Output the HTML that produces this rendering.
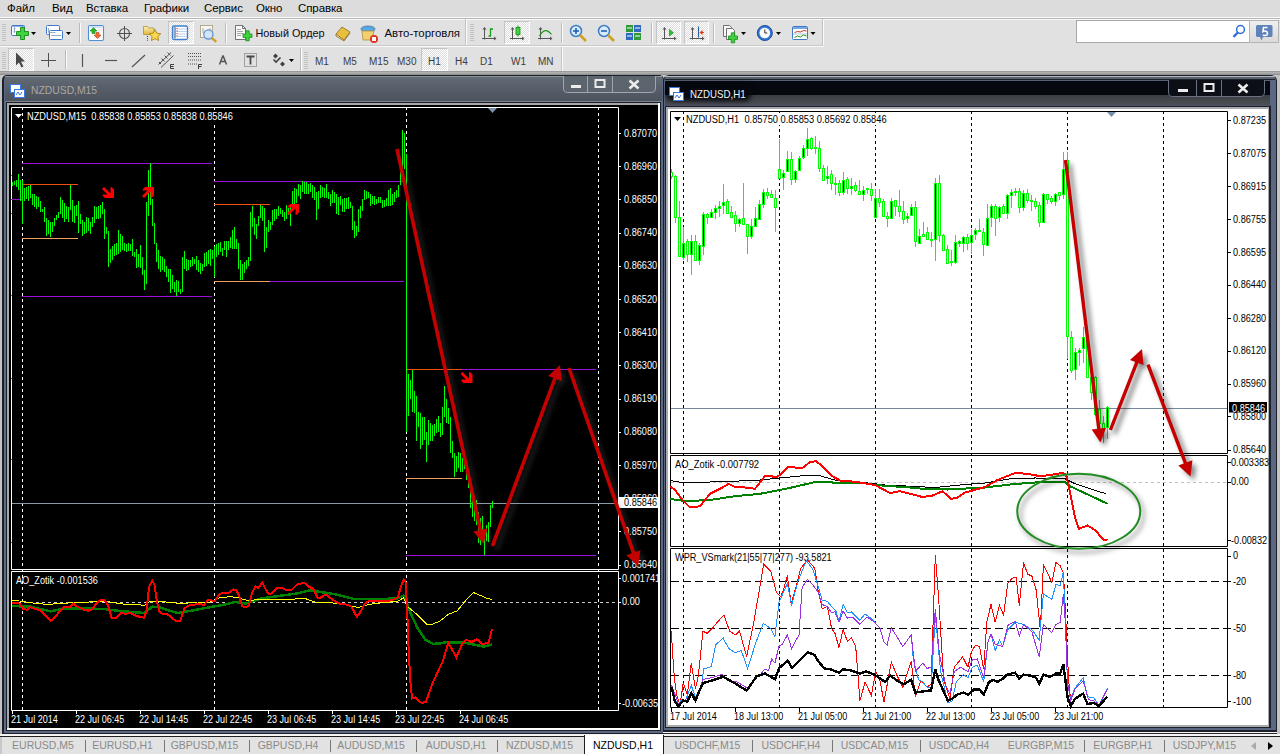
<!DOCTYPE html><html><head><meta charset="utf-8"><style>
*{margin:0;padding:0;box-sizing:border-box}
html,body{width:1280px;height:754px;overflow:hidden;background:#e4e4e4;font-family:"Liberation Sans", sans-serif}
.a{position:absolute}
.mi{position:absolute;top:1px;font-size:11.5px;color:#000;line-height:14px;letter-spacing:-0.1px}
.tab{position:absolute;top:737px;font-size:10.5px;color:#8a8a8a;line-height:16px;white-space:nowrap}
.sep{position:absolute;top:740px;width:1px;height:12px;background:#777}
svg text{font-family:"Liberation Sans", sans-serif}
</style></head><body>
<div class="a" style="left:0;top:0;width:1280px;height:18px;background:#dcdcdc"></div>
<div class="a" style="left:0;top:17px;width:1280px;height:1px;background:#fafafa"></div>
<div class="a" style="left:0;top:18px;width:1280px;height:1px;background:#b4b4b4"></div>
<div class="a" style="left:0;top:19px;width:1280px;height:1px;background:#fafafa"></div>
<div class="mi" style="left:7px">Файл</div>
<div class="mi" style="left:52px">Вид</div>
<div class="mi" style="left:86px">Вставка</div>
<div class="mi" style="left:144px">Графики</div>
<div class="mi" style="left:204px">Сервис</div>
<div class="mi" style="left:256px">Окно</div>
<div class="mi" style="left:298px">Справка</div>
<div class="a" style="left:0;top:20px;width:1280px;height:52px;background:#e1e1e1"></div>
<div class="a" style="left:0;top:45px;width:823px;height:1px;background:#c9c9c9"></div>
<div class="a" style="left:0;top:46px;width:824px;height:1px;background:#fafafa"></div>
<div class="a" style="left:2px;top:24px;width:4px;height:1px;background:#c2c2c2"></div>
<div class="a" style="left:2px;top:26px;width:4px;height:1px;background:#c2c2c2"></div>
<div class="a" style="left:2px;top:28px;width:4px;height:1px;background:#c2c2c2"></div>
<div class="a" style="left:2px;top:30px;width:4px;height:1px;background:#c2c2c2"></div>
<div class="a" style="left:2px;top:32px;width:4px;height:1px;background:#c2c2c2"></div>
<div class="a" style="left:2px;top:34px;width:4px;height:1px;background:#c2c2c2"></div>
<div class="a" style="left:2px;top:36px;width:4px;height:1px;background:#c2c2c2"></div>
<div class="a" style="left:2px;top:38px;width:4px;height:1px;background:#c2c2c2"></div>
<div class="a" style="left:2px;top:40px;width:4px;height:1px;background:#c2c2c2"></div>
<div class="a" style="left:2px;top:52px;width:4px;height:1px;background:#c2c2c2"></div>
<div class="a" style="left:2px;top:54px;width:4px;height:1px;background:#c2c2c2"></div>
<div class="a" style="left:2px;top:56px;width:4px;height:1px;background:#c2c2c2"></div>
<div class="a" style="left:2px;top:58px;width:4px;height:1px;background:#c2c2c2"></div>
<div class="a" style="left:2px;top:60px;width:4px;height:1px;background:#c2c2c2"></div>
<div class="a" style="left:2px;top:62px;width:4px;height:1px;background:#c2c2c2"></div>
<div class="a" style="left:2px;top:64px;width:4px;height:1px;background:#c2c2c2"></div>
<div class="a" style="left:2px;top:66px;width:4px;height:1px;background:#c2c2c2"></div>
<div class="a" style="left:2px;top:68px;width:4px;height:1px;background:#c2c2c2"></div>
<div class="a" style="left:470px;top:24px;width:4px;height:1px;background:#c2c2c2"></div>
<div class="a" style="left:470px;top:26px;width:4px;height:1px;background:#c2c2c2"></div>
<div class="a" style="left:470px;top:28px;width:4px;height:1px;background:#c2c2c2"></div>
<div class="a" style="left:470px;top:30px;width:4px;height:1px;background:#c2c2c2"></div>
<div class="a" style="left:470px;top:32px;width:4px;height:1px;background:#c2c2c2"></div>
<div class="a" style="left:470px;top:34px;width:4px;height:1px;background:#c2c2c2"></div>
<div class="a" style="left:470px;top:36px;width:4px;height:1px;background:#c2c2c2"></div>
<div class="a" style="left:470px;top:38px;width:4px;height:1px;background:#c2c2c2"></div>
<div class="a" style="left:470px;top:40px;width:4px;height:1px;background:#c2c2c2"></div>
<div class="a" style="left:304px;top:52px;width:4px;height:1px;background:#c2c2c2"></div>
<div class="a" style="left:304px;top:54px;width:4px;height:1px;background:#c2c2c2"></div>
<div class="a" style="left:304px;top:56px;width:4px;height:1px;background:#c2c2c2"></div>
<div class="a" style="left:304px;top:58px;width:4px;height:1px;background:#c2c2c2"></div>
<div class="a" style="left:304px;top:60px;width:4px;height:1px;background:#c2c2c2"></div>
<div class="a" style="left:304px;top:62px;width:4px;height:1px;background:#c2c2c2"></div>
<div class="a" style="left:304px;top:64px;width:4px;height:1px;background:#c2c2c2"></div>
<div class="a" style="left:304px;top:66px;width:4px;height:1px;background:#c2c2c2"></div>
<div class="a" style="left:304px;top:68px;width:4px;height:1px;background:#c2c2c2"></div>
<div class="a" style="left:79px;top:23px;width:1px;height:20px;background:#b9b9b9"></div>
<div class="a" style="left:80px;top:23px;width:1px;height:20px;background:#fdfdfd"></div>
<div class="a" style="left:225px;top:23px;width:1px;height:20px;background:#b9b9b9"></div>
<div class="a" style="left:226px;top:23px;width:1px;height:20px;background:#fdfdfd"></div>
<div class="a" style="left:561px;top:23px;width:1px;height:20px;background:#b9b9b9"></div>
<div class="a" style="left:562px;top:23px;width:1px;height:20px;background:#fdfdfd"></div>
<div class="a" style="left:651px;top:23px;width:1px;height:20px;background:#b9b9b9"></div>
<div class="a" style="left:652px;top:23px;width:1px;height:20px;background:#fdfdfd"></div>
<div class="a" style="left:713px;top:23px;width:1px;height:20px;background:#b9b9b9"></div>
<div class="a" style="left:714px;top:23px;width:1px;height:20px;background:#fdfdfd"></div>
<div class="a" style="left:65px;top:50px;width:1px;height:19px;background:#b9b9b9"></div>
<div class="a" style="left:66px;top:50px;width:1px;height:19px;background:#fdfdfd"></div>
<div class="a" style="left:300px;top:48px;width:1px;height:23px;background:#b9b9b9"></div>
<div class="a" style="left:301px;top:48px;width:1px;height:23px;background:#fdfdfd"></div>
<div class="a" style="left:465px;top:19px;width:1px;height:26px;background:#c4c4c4"></div>
<div class="a" style="left:466px;top:19px;width:1px;height:26px;background:#fafafa"></div>
<div class="a" style="left:822px;top:19px;width:1px;height:26px;background:#c4c4c4"></div>
<div class="a" style="left:823px;top:19px;width:1px;height:26px;background:#fafafa"></div>
<div class="a" style="left:561px;top:47px;width:1px;height:25px;background:#c4c4c4"></div>
<div class="a" style="left:562px;top:47px;width:1px;height:25px;background:#fafafa"></div>
<div class="a" style="left:168px;top:21px;width:26px;height:23px;background:repeating-conic-gradient(#ffffff 0 25%,#dcdcdc 0 50%) 0 0/2px 2px;border:1px solid;border-color:#c4c4c4 #fdfdfd #fdfdfd #c4c4c4"></div>
<div class="a" style="left:504px;top:21px;width:26px;height:23px;background:repeating-conic-gradient(#ffffff 0 25%,#dcdcdc 0 50%) 0 0/2px 2px;border:1px solid;border-color:#c4c4c4 #fdfdfd #fdfdfd #c4c4c4"></div>
<div class="a" style="left:656px;top:21px;width:25px;height:23px;background:repeating-conic-gradient(#ffffff 0 25%,#dcdcdc 0 50%) 0 0/2px 2px;border:1px solid;border-color:#c4c4c4 #fdfdfd #fdfdfd #c4c4c4"></div>
<div class="a" style="left:684px;top:21px;width:25px;height:23px;background:repeating-conic-gradient(#ffffff 0 25%,#dcdcdc 0 50%) 0 0/2px 2px;border:1px solid;border-color:#c4c4c4 #fdfdfd #fdfdfd #c4c4c4"></div>
<div class="a" style="left:8px;top:48px;width:26px;height:23px;background:repeating-conic-gradient(#ffffff 0 25%,#dcdcdc 0 50%) 0 0/2px 2px;border:1px solid;border-color:#c4c4c4 #fdfdfd #fdfdfd #c4c4c4"></div>
<div class="a" style="left:421px;top:48px;width:27px;height:23px;background:repeating-conic-gradient(#ffffff 0 25%,#dcdcdc 0 50%) 0 0/2px 2px;border:1px solid;border-color:#c4c4c4 #fdfdfd #fdfdfd #c4c4c4"></div>
<svg class="a" style="left:0;top:0" width="480" height="46"><text x="255.5" y="36.5" font-size="10.6" fill="#0a0a1a" textLength="69.0" lengthAdjust="spacingAndGlyphs" xml:space="preserve" >Новый Ордер</text><text x="384.5" y="36.5" font-size="10.6" fill="#0a0a1a" textLength="75.5" lengthAdjust="spacingAndGlyphs" xml:space="preserve" >Авто-торговля</text></svg>
<div class="a" style="left:315px;top:56px;font-size:10px;color:#3c3c3c;line-height:12px;white-space:nowrap">M1</div>
<div class="a" style="left:343px;top:56px;font-size:10px;color:#3c3c3c;line-height:12px;white-space:nowrap">M5</div>
<div class="a" style="left:369px;top:56px;font-size:10px;color:#3c3c3c;line-height:12px;white-space:nowrap">M15</div>
<div class="a" style="left:397px;top:56px;font-size:10px;color:#3c3c3c;line-height:12px;white-space:nowrap">M30</div>
<div class="a" style="left:428px;top:56px;font-size:10px;color:#3c3c3c;line-height:12px;white-space:nowrap">H1</div>
<div class="a" style="left:455px;top:56px;font-size:10px;color:#3c3c3c;line-height:12px;white-space:nowrap">H4</div>
<div class="a" style="left:480px;top:56px;font-size:10px;color:#3c3c3c;line-height:12px;white-space:nowrap">D1</div>
<div class="a" style="left:511px;top:56px;font-size:10px;color:#3c3c3c;line-height:12px;white-space:nowrap">W1</div>
<div class="a" style="left:538px;top:56px;font-size:10px;color:#3c3c3c;line-height:12px;white-space:nowrap">MN</div>
<div class="a" style="left:1076px;top:20px;width:174px;height:23px;background:#fff;border:1px solid #a8a8a8"></div>
<div class="a" style="left:1249px;top:20px;width:30px;height:23px;background:linear-gradient(#efefef,#dadada);border:1px solid #b4b4b4"></div>
<svg class="a" style="left:0;top:0" width="1280" height="72" viewBox="0 0 1280 72">
<rect x="11.5" y="25.5" width="13" height="10" rx="1" fill="#fff" stroke="#3b78c8"/><path d="M12 26.5h12" stroke="#8fb4e8"/><path d="M14.5 27.5v5M13.5 28.5l1-1 1 1M13.5 31.5l1 1 1-1" stroke="#7a98c0" fill="none" stroke-width="0.8"/><path d="M20 31.5h4v-4h4v4h4v4h-4v4h-4v-4h-4z" transform="translate(-3.5,0)" fill="#3fd43f" stroke="#178a17" stroke-width="0.9"/><path d="M31 32h5l-2.5 3z" fill="#000"/><rect x="46.5" y="25.5" width="13" height="9" rx="1" fill="#fff" stroke="#3b78c8"/><rect x="49.5" y="30.5" width="13" height="9" rx="1" fill="#fff" stroke="#3b78c8"/><path d="M48.5 32.5h7M51 35.5h10M48.5 28v4.5" stroke="#7a98c0" stroke-width="0.8"/><path d="M66 32h5l-2.5 3z" fill="#000"/><rect x="88.5" y="25.5" width="15" height="15" rx="1.5" fill="#fff" stroke="#4f8fd8" stroke-width="1.1"/><path d="M90 27h12" stroke="#a8c8f0"/><path d="M98 29h4M98 31h4M95 36h6M95 38h6" stroke="#ddd" stroke-width="0.7"/><path d="M90 31l3.5-3.5 3.5 3.5h-2v2.5h-3v-2.5z" fill="#2cb52c" stroke="#168a16" stroke-width="0.6"/><path d="M94 35l3.5 3.5 3.5-3.5h-2v-2.5h-3v2.5z" fill="#ee6a3a" stroke="#c04010" stroke-width="0.6"/><circle cx="124.5" cy="33.5" r="5" fill="none" stroke="#505050" stroke-width="1.1"/><path d="M124.5 26v15M117 33.5h15" stroke="#505050" stroke-width="1"/><defs><linearGradient id="fg" x1="0" y1="0" x2="0" y2="1"><stop offset="0" stop-color="#fbf0b8"/><stop offset="1" stop-color="#e0b838"/></linearGradient></defs><path d="M143.5 26.5h4l1 1.5h5.5v6.5h-10.5z" fill="url(#fg)" stroke="#b0902a" stroke-width="0.8"/><path d="M147.5 36v5" stroke="#333" stroke-dasharray="1,1.2"/><path d="M155 29.5l1.8 3.7 4 .5-2.9 2.8.7 4-3.6-1.9-3.6 1.9.7-4-2.9-2.8 4-.5z" fill="#f6d848" stroke="#b08418" stroke-width="0.9"/><rect x="172.5" y="26" width="15" height="13.5" rx="1.5" fill="#fff" stroke="#3d7fd0" stroke-width="1.3"/><rect x="173.5" y="27" width="2.5" height="11.5" fill="#8aa4c4"/><path d="M177 29h10M177 31.5h10M177 34h10M177 36.5h10" stroke="#a9c4ee" stroke-width="0.8"/><path d="M176.5 28.5h1M176.5 33.5h1" stroke="#d02020" stroke-width="1"/><path d="M176.5 31h1M176.5 36h1" stroke="#202020" stroke-width="1"/><rect x="200.5" y="25.5" width="12" height="12" fill="#f8f6ee" stroke="#b0a890"/><path d="M203 28v5M210 28v5" stroke="#909090" stroke-width="0.8"/><circle cx="208.4" cy="34.5" r="4.6" fill="#cfe2f6" fill-opacity="0.85" stroke="#5a90d0" stroke-width="1.2"/><path d="M211.8 38l4.5 3.8" stroke="#d0a020" stroke-width="2.4"/><path d="M235.5 25.5h7l3 3v11h-10z" fill="#fafafa" stroke="#707070"/><path d="M242.5 25.5v3h3" fill="none" stroke="#707070"/><path d="M237 29.5h4M237 31.5h6M237 33.5h6M237 35.5h4" stroke="#909090" stroke-width="0.8"/><path d="M243 34h2.8v-3.2h3.4v3.2h2.8v3.4h-2.8v3.4h-3.4v-3.4h-2.8z" fill="#3fd43f" stroke="#178a17" stroke-width="0.8"/><path d="M336 34l6-7 8 5-6 8z" fill="#e8c040" stroke="#9a7420" stroke-width="0.9"/><path d="M336 34l0 2 8 5 6-8" fill="none" stroke="#9a7420" stroke-width="0.9"/><ellipse cx="368" cy="29" rx="7" ry="3" fill="#5aa8e0" stroke="#3a78b0" stroke-width="0.8"/><path d="M362 31l12 0-2 9h-9z" fill="#f2d070" stroke="#b09040" stroke-width="0.8"/><circle cx="374" cy="39" r="4" fill="#e03020"/><rect x="372" y="37" width="4" height="4" fill="#fff"/><path d="M484.5 28.0v11.5M482.0 38.5h13" stroke="#555" stroke-width="1"/><path d="M482.5 29.5l2-2.5 2 2.5zM494.0 36.5l2.5 2-2.5 2z" fill="#555"/><path d="M488.5 36h2v-7h2.5" fill="none" stroke="#1a9a1a" stroke-width="1.3"/><path d="M512.5 28.0v11.5M510.0 38.5h13" stroke="#555" stroke-width="1"/><path d="M510.5 29.5l2-2.5 2 2.5zM522.0 36.5l2.5 2-2.5 2z" fill="#555"/><path d="M518 25.5v11" stroke="#168a16"/><rect x="516" y="27.5" width="4" height="7" fill="#3fd43f" stroke="#168a16" stroke-width="0.8"/><path d="M540.5 28.0v11.5M538.0 38.5h13" stroke="#555" stroke-width="1"/><path d="M538.5 29.5l2-2.5 2 2.5zM550.0 36.5l2.5 2-2.5 2z" fill="#555"/><path d="M539.5 36Q545 26 551.5 34.5" fill="none" stroke="#1a9a1a" stroke-width="1.2"/><circle cx="576" cy="31" r="5.5" fill="#d8ecfb" stroke="#3c7cc8" stroke-width="1.5"/><path d="M580 35l6 6" stroke="#d0a020" stroke-width="2.6"/><path d="M573 31h6" stroke="#2060b0" stroke-width="1.6"/><path d="M576 28v6" stroke="#2060b0" stroke-width="1.6"/><circle cx="604" cy="31" r="5.5" fill="#d8ecfb" stroke="#3c7cc8" stroke-width="1.5"/><path d="M608 35l6 6" stroke="#d0a020" stroke-width="2.6"/><path d="M601 31h6" stroke="#2060b0" stroke-width="1.6"/><rect x="626" y="25" width="7" height="7" fill="#2e9a3a"/><rect x="634" y="25" width="7" height="7" fill="#2f68c0"/><rect x="626" y="33" width="7" height="7" fill="#2f68c0"/><rect x="634" y="33" width="7" height="7" fill="#2e9a3a"/><path d="M627 28h5M635 28h5M627 36h5M635 36h5" stroke="#fff" stroke-width="1"/><path d="M664.5 28.0v11.5M662.0 38.5h13" stroke="#555" stroke-width="1"/><path d="M662.5 29.5l2-2.5 2 2.5zM674.0 36.5l2.5 2-2.5 2z" fill="#555"/><path d="M669.5 29.5l4 3.2-4 3.2z" fill="#2cc02c" stroke="#168a16" stroke-width="0.6"/><path d="M692.5 28.0v11.5M690.0 38.5h13" stroke="#555" stroke-width="1"/><path d="M690.5 29.5l2-2.5 2 2.5zM702.0 36.5l2.5 2-2.5 2z" fill="#555"/><path d="M698.5 26.5v11" stroke="#2a5a9a" stroke-width="1.1"/><path d="M699.5 32.5l3-2.5v5z" fill="#e04010"/><path d="M702 32.5h2" stroke="#e04010"/><path d="M723.5 25.5h6l2 2v9h-8z" fill="#fafafa" stroke="#707070"/><path d="M726.5 28.5h6l2 2v9h-8z" fill="#fafafa" stroke="#707070"/><path d="M728.5 36h2.8v-3.2h3.4v3.2h2.8v3.4h-2.8v3.4h-3.4v-3.4h-2.8z" fill="#3fd43f" stroke="#178a17" stroke-width="0.8"/><path d="M741 32h5l-2.5 3z" fill="#000"/><circle cx="764.8" cy="33" r="7.5" fill="#2f78d8" stroke="#1a4a90"/><circle cx="764.8" cy="33" r="5.3" fill="#fafafa"/><path d="M764.8 29.5v3.5h2.5" stroke="#333" fill="none"/><path d="M776 32h5l-2.5 3z" fill="#000"/><rect x="792.5" y="26.5" width="15" height="13" rx="1" fill="#fff" stroke="#3b78c8"/><rect x="793" y="27" width="14" height="2" fill="#7aa6e0"/><path d="M793 34h14" stroke="#a0b8d8" stroke-width="0.8"/><path d="M794.5 32.5l3-1 3 .5 3-1.5 3 .5" stroke="#c03020" fill="none"/><path d="M794.5 37.5l3-1.5 3 1 3-2 3 1" stroke="#1a9a1a" fill="none"/><path d="M810.5 32h5l-2.5 3z" fill="#000"/><circle cx="1240.5" cy="29.5" r="3.9" fill="#fff" stroke="#2f6ed8" stroke-width="1.5"/><path d="M1237.8 32.5l-4.3 4.3" stroke="#2f6ed8" stroke-width="2.4"/><path d="M1257.5 25h13.5a1.5 1.5 0 0 1 1.5 1.5v9a1.5 1.5 0 0 1-1.5 1.5h-8l-1.5 3.5-1.5-3.5h-2.5a1.5 1.5 0 0 1-1.5-1.5v-9a1.5 1.5 0 0 1 1.5-1.5z" fill="#5f82b8"/><path d="M1267.5 27.5h-4l-.5 4c2-1 4.5-.5 4.5 1.8 0 2.5-3.2 2.7-4.7 1.6" fill="none" stroke="#fff" stroke-width="1.6"/><path d="M16 52.5v13l3-3 2.5 5 2-1-2.5-5h4z" fill="#484848"/><path d="M48.5 53v14M41 60.5h15" stroke="#505050" stroke-width="1"/><path d="M82.5 54v13" stroke="#555" stroke-width="1.2"/><path d="M105 60.5h12" stroke="#555" stroke-width="1.2"/><path d="M132 67l13-12" stroke="#555" stroke-width="1.2"/><path d="M158.5 64.5l12.5-12M161 67.5l12.5-12M161.5 58.5l3 3M164.5 55.5l3 3M167.5 52.5l3 3M159 62l2 2" stroke="#505050" stroke-width="1"/><path d="M170.5 64.5v4M170.5 64.5h3.5M170.5 66.5h3M170.5 68.5h3.5" stroke="#404040" stroke-width="1"/><path d="M188 53.5h13M188 56.5h13M188 60h13M188 64h9" stroke="#505050" stroke-width="1" stroke-dasharray="1,1"/><path d="M198.5 64.5v4.5M198.5 64.5h3.5M198.5 66.5h3" stroke="#404040" stroke-width="1"/><path d="M219.5 64.5l3.3-8.5h0.4l3.3 8.5M221 61.5h4.2" stroke="#555" stroke-width="1.5" fill="none"/><rect x="244.5" y="53.5" width="12" height="13" fill="none" stroke="#606060" stroke-dasharray="1,1"/><path d="M246.5 56.5h8M250.5 56.5v8" stroke="#484848" stroke-width="1.8"/><path d="M275.5 53.5l2.5 2.5-2.5 2.5-2.5-2.5zM282.5 61.5l2.5 2.5-2.5 2.5-2.5-2.5z" fill="#404040"/><path d="M273.5 59.5l2.5 2.5 4.5-4.5" stroke="#404040" stroke-width="1.6" fill="none"/><path d="M289 59h5l-2.5 3z" fill="#000"/>
</svg>
<div class="a" style="left:0;top:71px;width:1280px;height:1px;background:#9a9a9a"></div>
<div class="a" style="left:0;top:72px;width:1280px;height:664px;background:#c4c4c4"></div>
<div class="a" style="left:0;top:72px;width:1280px;height:3px;background:linear-gradient(#b8b8b8,#8c8c8c)"></div>
<div class="a" style="left:2px;top:75px;width:662px;height:659px;background:#1c2028;border-radius:5px 5px 0 0"></div>
<div class="a" style="left:4px;top:76px;width:659px;height:657px;background:#5e6a84;border-radius:4px 4px 0 0"></div>
<div class="a" style="left:5px;top:76px;width:657px;height:1px;background:#8c949c;"></div>
<div class="a" style="left:5px;top:77px;width:657px;height:24px;background:linear-gradient(#626a75,#545b66 60%,#4d545e);"></div>
<div class="a" style="left:6px;top:101px;width:655px;height:1px;background:#7c848c;"></div>
<div class="a" style="left:6px;top:102px;width:655px;height:629px;background:#1c2028;"></div>
<div class="a" style="left:7px;top:103px;width:653px;height:627px;background:#ffffff;"></div>
<div class="a" style="left:7px;top:103px;width:651px;height:625px;background:#a8a8a8;"></div>
<div class="a" style="left:9px;top:105px;width:649px;height:623px;background:#000;"></div>
<svg class="a" style="left:563px;top:76px" width="94" height="18"><path d="M0.5 0V12.0Q0.5 16.5 4.5 16.5H88.0Q92.5 16.5 92.5 12.0V0" fill="#5c646e" stroke="#a0a6ae"/><path d="M24.5 0V16.0M49.5 0V16.0" stroke="#a0a6ae"/><rect x="8" y="9" width="10" height="3" fill="#ececec"/><rect x="32.5" y="4.0" width="9" height="7" fill="none" stroke="#ececec" stroke-width="2"/><path d="M32.5 3.5h9" stroke="#ececec" stroke-width="1"/><path d="M66.5 4.5L75.5 12.5M75.5 4.5L66.5 12.5" stroke="#ececec" stroke-width="2.6"/></svg>
<svg class="a" style="left:0;top:0" width="800" height="110"><text x="31.0" y="94.0" font-size="11.5" fill="#aca8a2" textLength="66.1" lengthAdjust="spacingAndGlyphs" xml:space="preserve" >NZDUSD,M15</text></svg>
<div class="a" style="left:663px;top:75px;width:614px;height:657px;background:#1c2028;border-radius:6px 6px 0 0"></div>
<div class="a" style="left:664px;top:76px;width:612px;height:654px;background:#5b6682;border-radius:5px 5px 0 0"></div>
<div class="a" style="left:665px;top:76px;width:610px;height:1px;background:#b4b8c0;border-radius:4px 4px 0 0"></div>
<div class="a" style="left:665px;top:77px;width:610px;height:2px;background:#5a6470;"></div>
<div class="a" style="left:665px;top:79px;width:610px;height:1px;background:#1c2028;"></div>
<div class="a" style="left:665px;top:80px;width:605px;height:1px;background:#586078;"></div>
<div class="a" style="left:665px;top:81px;width:605px;height:14px;background:#05080e;"></div>
<div class="a" style="left:665px;top:95px;width:605px;height:10px;background:linear-gradient(#3a3e42,#4c5054);"></div>
<div class="a" style="left:665px;top:105px;width:606px;height:1px;background:#4a5068;"></div>
<div class="a" style="left:667px;top:84px;width:84px;height:17px;background:#05080e;filter:blur(2.5px);border-radius:6px"></div>
<div class="a" style="left:665px;top:106px;width:606px;height:622px;background:#1c2028;"></div>
<div class="a" style="left:666px;top:107px;width:603px;height:620px;background:#a8aaac;"></div>
<div class="a" style="left:668px;top:109px;width:600px;height:616px;background:#fff;"></div>
<div class="a" style="left:663px;top:732px;width:614px;height:1px;background:#f2f2f2;"></div>
<div class="a" style="left:663px;top:733px;width:614px;height:1px;background:#2a2a2a;"></div>
<svg class="a" style="left:1168px;top:80px" width="98" height="18"><path d="M0.5 0V12.0Q0.5 16.5 4.5 16.5H92.0Q96.5 16.5 96.5 12.0V0" fill="#0c0f16" stroke="#6a7282"/><path d="M28.5 0V16.0M53.5 0V16.0" stroke="#6a7282"/><rect x="10" y="9" width="10" height="3" fill="#ececec"/><rect x="36.5" y="4.0" width="9" height="7" fill="none" stroke="#ececec" stroke-width="2"/><path d="M36.5 3.5h9" stroke="#ececec" stroke-width="1"/><path d="M70.5 4.5L79.5 12.5M79.5 4.5L70.5 12.5" stroke="#ececec" stroke-width="2.6"/></svg>
<svg class="a" style="left:0;top:0" width="800" height="110"><text x="690.0" y="98.0" font-size="11.5" fill="#f4f4f4" textLength="55.6" lengthAdjust="spacingAndGlyphs" xml:space="preserve" >NZDUSD,H1</text></svg>
<svg class="a" style="left:10px;top:84px" width="16" height="15"><rect x="0.5" y="0.5" width="10" height="8" fill="#fff" stroke="#3a7ae0"/><rect x="4.5" y="5.5" width="10" height="8" fill="#fff" stroke="#3a7ae0"/><path d="M6 11l2-3 2 3 2-3" stroke="#3a7ae0" fill="none"/></svg>
<svg class="a" style="left:669px;top:87px" width="16" height="15"><rect x="0.5" y="0.5" width="10" height="8" fill="#fff" stroke="#3a7ae0"/><rect x="4.5" y="5.5" width="10" height="8" fill="#fff" stroke="#3a7ae0"/><path d="M6 11l2-3 2 3 2-3" stroke="#3a7ae0" fill="none"/></svg>
<div class="a" style="left:0;top:734px;width:1280px;height:2px;background:#f4f4f4"></div>
<div class="a" style="left:0;top:736px;width:1280px;height:1px;background:#202020"></div>
<div class="a" style="left:0;top:737px;width:1280px;height:17px;background:#e2e2e2"></div>
<div class="a" style="left:0;top:737px;width:2px;height:17px;background:#c8c8c8"></div>
<div class="a" style="left:584px;top:735px;width:80px;height:19px;background:#fff;border:1px solid #202020;border-bottom:none;border-top:none"></div>
<div class="tab" style="left:8px;width:70px;color:#8a8a8a;text-align:center">EURUSD,M5</div>
<div class="tab" style="left:88px;width:69px;color:#8a8a8a;text-align:center">EURUSD,H1</div>
<div class="tab" style="left:167px;width:75px;color:#8a8a8a;text-align:center">GBPUSD,M15</div>
<div class="tab" style="left:253px;width:70px;color:#8a8a8a;text-align:center">GBPUSD,H4</div>
<div class="tab" style="left:333px;width:76px;color:#8a8a8a;text-align:center">AUDUSD,M15</div>
<div class="tab" style="left:421px;width:70px;color:#8a8a8a;text-align:center">AUDUSD,H1</div>
<div class="tab" style="left:501px;width:77px;color:#8a8a8a;text-align:center">NZDUSD,M15</div>
<div class="tab" style="left:588px;width:70px;color:#000;text-align:center">NZDUSD,H1</div>
<div class="tab" style="left:669px;width:77px;color:#8a8a8a;text-align:center">USDCHF,M15</div>
<div class="tab" style="left:756px;width:70px;color:#8a8a8a;text-align:center">USDCHF,H4</div>
<div class="tab" style="left:836px;width:77px;color:#8a8a8a;text-align:center">USDCAD,M15</div>
<div class="tab" style="left:924px;width:70px;color:#8a8a8a;text-align:center">USDCAD,H4</div>
<div class="tab" style="left:1003px;width:76px;color:#8a8a8a;text-align:center">EURGBP,M15</div>
<div class="tab" style="left:1089px;width:68px;color:#8a8a8a;text-align:center">EURGBP,H1</div>
<div class="tab" style="left:1168px;width:73px;color:#8a8a8a;text-align:center">USDJPY,M15</div>
<div class="sep" style="left:85px"></div>
<div class="sep" style="left:164px"></div>
<div class="sep" style="left:249px"></div>
<div class="sep" style="left:330px"></div>
<div class="sep" style="left:416px"></div>
<div class="sep" style="left:497px"></div>
<div class="sep" style="left:752px"></div>
<div class="sep" style="left:832px"></div>
<div class="sep" style="left:920px"></div>
<div class="sep" style="left:1084px"></div>
<div class="sep" style="left:1164px"></div>
<svg class="a" style="left:1248px;top:740px" width="30" height="12"><path d="M8 2v8l-5-4z" fill="#aaa"/><path d="M20 2v8l5-4z" fill="#000"/></svg>
<svg class="a" style="left:0;top:0" width="1280" height="754" viewBox="0 0 1280 754"><defs><filter id="sh" x="-50%" y="-50%" width="200%" height="200%"><feGaussianBlur stdDeviation="2.5"/></filter><clipPath id="clL"><rect x="9" y="104" width="649" height="624"/></clipPath><clipPath id="clR"><rect x="667" y="107" width="601" height="618"/></clipPath><clipPath id="clLmain"><rect x="12" y="108" width="606" height="461"/></clipPath><clipPath id="clRmain"><rect x="671" y="112" width="556" height="341"/></clipPath></defs><g clip-path="url(#clL)"><path d="M22.5 107V710" stroke="#fff" stroke-width="1" stroke-dasharray="3,3"/><path d="M214.5 107V710" stroke="#fff" stroke-width="1" stroke-dasharray="3,3"/><path d="M406.5 107V710" stroke="#fff" stroke-width="1" stroke-dasharray="3,3"/><path d="M598.5 107V710" stroke="#fff" stroke-width="1" stroke-dasharray="3,3"/><path d="M11.5 107.5H618.5V569.5H11.5Z" fill="none" stroke="#fff"/><path d="M11.5 571.5H618.5V710.5H11.5Z" fill="none" stroke="#fff"/><path d="M12 503.5H618" stroke="#8a9aa8"/><path d="M22 163.5H212M214 181.5H406M22 296.5H212M214 281.5H404M406 369.5H596M406 555.5H596M11 199.5H22" stroke="#9a10d8" stroke-width="1.2"/><path d="M22 184.5H78M214 204.5H270M406 369.5H462" stroke="#f05010" stroke-width="1.2"/><path d="M22 238.5H78M214 281.5H270M406 478.5H462" stroke="#f0a060" stroke-width="1.2"/><path d="M12.5 182V186M14.5 181V185M16.5 180V187M18.5 174V190M20.5 180V201M22.5 180V224M24.5 188V201M26.5 187V199M28.5 186V201M30.5 185V198M32.5 194V205M34.5 194V207M36.5 196V209M38.5 197V207M40.5 201V212M42.5 209V212M44.5 207V222M46.5 218V236M48.5 220V234M50.5 222V237M52.5 222V232M54.5 218V226M56.5 215V220M58.5 212V218M60.5 197V214M62.5 200V218M64.5 203V222M66.5 206V219M68.5 207V222M70.5 185V210M72.5 200V222M74.5 206V223M76.5 205V216M78.5 201V233M80.5 214V224M82.5 220V236M84.5 222V234M86.5 217V233M88.5 218V231M90.5 222V234M92.5 217V227M94.5 206V223M96.5 207V219M98.5 206V219M100.5 205V218M102.5 202V214M104.5 209V239M106.5 227V234M108.5 231V267M110.5 249V263M112.5 246V260M114.5 244V256M116.5 243V255M118.5 230V254M120.5 234V252M122.5 236V250M124.5 243V251M126.5 244V252M128.5 243V251M130.5 244V251M132.5 239V256M134.5 252V257M136.5 249V268M138.5 254V267M140.5 245V268M142.5 257V275M144.5 270V290M146.5 202V284M148.5 170V216M150.5 163V205M152.5 199V226M154.5 223V244M156.5 243V262M158.5 250V269M160.5 256V272M162.5 257V270M164.5 259V272M166.5 266V277M168.5 269V282M170.5 269V293M172.5 275V289M174.5 282V292M176.5 280V296M178.5 281V292M180.5 289V294M182.5 257V292M184.5 251V269M186.5 259V271M188.5 260V270M190.5 260V267M192.5 257V266M194.5 259V264M196.5 256V270M198.5 260V272M200.5 263V274M202.5 264V271M204.5 253V267M206.5 252V266M208.5 250V264M210.5 249V266M212.5 250V259M214.5 246V277M216.5 244V257M218.5 243V255M220.5 242V252M222.5 248V256M224.5 241V250M226.5 241V257M228.5 241V250M230.5 237V248M232.5 230V249M234.5 227V249M236.5 239V249M238.5 243V269M240.5 260V280M242.5 264V280M244.5 262V273M246.5 260V269M248.5 257V266M250.5 212V261M252.5 206V227M254.5 218V235M256.5 224V239M258.5 216V226M260.5 205V218M262.5 206V221M264.5 208V252M266.5 227V248M268.5 220V232M270.5 222V230M272.5 210V225M274.5 209V221M276.5 209V219M278.5 206V216M280.5 208V214M282.5 210V217M284.5 212V221M286.5 205V219M288.5 208V215M290.5 204V226M292.5 191V204M294.5 188V205M296.5 189V203M298.5 184V196M300.5 185V199M302.5 181V192M304.5 182V194M306.5 182V194M308.5 184V194M310.5 183V192M312.5 185V198M314.5 187V200M316.5 192V220M318.5 191V209M320.5 185V198M322.5 187V197M324.5 188V198M326.5 184V198M328.5 192V199M330.5 194V206M332.5 190V203M334.5 192V203M336.5 194V214M338.5 197V215M340.5 196V205M342.5 199V212M344.5 198V212M346.5 198V209M348.5 197V209M350.5 202V208M352.5 206V230M354.5 221V238M356.5 226V236M358.5 209V232M360.5 206V218M362.5 199V211M364.5 190V200M366.5 191V199M368.5 192V198M370.5 194V206M372.5 196V204M374.5 196V205M376.5 199V204M378.5 197V203M380.5 197V203M382.5 200V208M384.5 200V207M386.5 198V206M388.5 190V206M390.5 188V206M392.5 194V205M394.5 192V202M396.5 190V198M398.5 185V197M400.5 168V185M402.5 130V169M404.5 133V169M406.5 154V432M408.5 374V416M410.5 380V399M412.5 370V412M414.5 391V413M416.5 396V441M418.5 412V427M420.5 413V449M422.5 417V445M424.5 417V440M426.5 432V462M428.5 420V445M430.5 423V441M432.5 425V441M434.5 424V436M436.5 419V433M438.5 416V432M440.5 423V437M442.5 407V435M444.5 386V417M446.5 399V423M448.5 408V424M450.5 417V453M452.5 441V458M454.5 453V477M456.5 456V472M458.5 452V468M460.5 453V472M462.5 458V472M464.5 456V469M466.5 465V480M468.5 474V488M470.5 480V508M472.5 493V517M474.5 496V521M476.5 500V525M478.5 512V543M480.5 518V545M482.5 516V538M484.5 530V555M486.5 525V541M488.5 522V542M490.5 505V527M492.5 501V508" stroke="#00ff00" stroke-width="1" fill="none"/><g transform="translate(102.0,187.0)"><polygon points="2,0 8.5,6.5 8.5,0.5 9.5,0 12,2.5 12,11 3,11 0.5,8.5 1,7.5 5.5,7.5 0,2" fill="#ff0000"/></g><g transform="translate(142.0,187.0) translate(0,11) scale(1,-1)"><polygon points="2,0 8.5,6.5 8.5,0.5 9.5,0 12,2.5 12,11 3,11 0.5,8.5 1,7.5 5.5,7.5 0,2" fill="#ff0000"/></g><g transform="translate(287.0,204.0) translate(0,11) scale(1,-1)"><polygon points="2,0 8.5,6.5 8.5,0.5 9.5,0 12,2.5 12,11 3,11 0.5,8.5 1,7.5 5.5,7.5 0,2" fill="#ff0000"/></g><g transform="translate(460.5,372.0)"><polygon points="2,0 8.5,6.5 8.5,0.5 9.5,0 12,2.5 12,11 3,11 0.5,8.5 1,7.5 5.5,7.5 0,2" fill="#ff0000"/></g><rect x="11" y="175" width="1" height="1" fill="#ff2020"/><rect x="11" y="213" width="1" height="1" fill="#ff2020"/><rect x="11" y="295" width="1" height="1" fill="#ff2020"/><rect x="11" y="378" width="1" height="1" fill="#ff2020"/><rect x="11" y="459" width="1" height="1" fill="#ff2020"/><rect x="11" y="542" width="1" height="1" fill="#ff2020"/></g><polygon points="488,108 497,108 492.5,113" fill="#7890a8"/><path d="M618 133.5h3" stroke="#fff"/><text x="624.0" y="136.6" font-size="10" fill="#fff" textLength="33.1" lengthAdjust="spacingAndGlyphs" xml:space="preserve" >0.87070</text><path d="M618 166.5h3" stroke="#fff"/><text x="624.0" y="169.8" font-size="10" fill="#fff" textLength="33.1" lengthAdjust="spacingAndGlyphs" xml:space="preserve" >0.86960</text><path d="M618 199.5h3" stroke="#fff"/><text x="624.0" y="203.0" font-size="10" fill="#fff" textLength="33.1" lengthAdjust="spacingAndGlyphs" xml:space="preserve" >0.86850</text><path d="M618 233.5h3" stroke="#fff"/><text x="624.0" y="236.2" font-size="10" fill="#fff" textLength="33.1" lengthAdjust="spacingAndGlyphs" xml:space="preserve" >0.86740</text><path d="M618 266.5h3" stroke="#fff"/><text x="624.0" y="269.4" font-size="10" fill="#fff" textLength="33.1" lengthAdjust="spacingAndGlyphs" xml:space="preserve" >0.86630</text><path d="M618 299.5h3" stroke="#fff"/><text x="624.0" y="302.6" font-size="10" fill="#fff" textLength="33.1" lengthAdjust="spacingAndGlyphs" xml:space="preserve" >0.86520</text><path d="M618 332.5h3" stroke="#fff"/><text x="624.0" y="335.8" font-size="10" fill="#fff" textLength="33.1" lengthAdjust="spacingAndGlyphs" xml:space="preserve" >0.86410</text><path d="M618 365.5h3" stroke="#fff"/><text x="624.0" y="369.0" font-size="10" fill="#fff" textLength="33.1" lengthAdjust="spacingAndGlyphs" xml:space="preserve" >0.86300</text><path d="M618 399.5h3" stroke="#fff"/><text x="624.0" y="402.2" font-size="10" fill="#fff" textLength="33.1" lengthAdjust="spacingAndGlyphs" xml:space="preserve" >0.86190</text><path d="M618 432.5h3" stroke="#fff"/><text x="624.0" y="435.4" font-size="10" fill="#fff" textLength="33.1" lengthAdjust="spacingAndGlyphs" xml:space="preserve" >0.86080</text><path d="M618 465.5h3" stroke="#fff"/><text x="624.0" y="468.6" font-size="10" fill="#fff" textLength="33.1" lengthAdjust="spacingAndGlyphs" xml:space="preserve" >0.85970</text><path d="M618 498.5h3" stroke="#fff"/><text x="624.0" y="501.8" font-size="10" fill="#fff" textLength="33.1" lengthAdjust="spacingAndGlyphs" xml:space="preserve" >0.85860</text><path d="M618 531.5h3" stroke="#fff"/><text x="624.0" y="535.0" font-size="10" fill="#fff" textLength="33.1" lengthAdjust="spacingAndGlyphs" xml:space="preserve" >0.85750</text><path d="M618 565.5h3" stroke="#fff"/><text x="624.0" y="568.2" font-size="10" fill="#fff" textLength="33.1" lengthAdjust="spacingAndGlyphs" xml:space="preserve" >0.85640</text><rect x="619" y="497" width="39" height="11" fill="#fff"/><text x="624.0" y="506.0" font-size="10" fill="#000" textLength="33.1" lengthAdjust="spacingAndGlyphs" xml:space="preserve" >0.85846</text><path d="M618 578.5h3M618 602.5h3M618 703.5h3" stroke="#fff"/><text x="622.0" y="582.2" font-size="10" fill="#fff" textLength="38.2" lengthAdjust="spacingAndGlyphs" xml:space="preserve" >0.001741</text><text x="622.0" y="605.4" font-size="10" fill="#fff" textLength="17.8" lengthAdjust="spacingAndGlyphs" xml:space="preserve" >0.00</text><text x="622.0" y="707.2" font-size="10" fill="#fff" textLength="36.1" lengthAdjust="spacingAndGlyphs" xml:space="preserve" >-0.00635</text><rect x="25" y="110" width="211" height="12" fill="#000"/><path d="M15 114h7l-3.5 4z" fill="#fff"/><text x="27.0" y="119.5" font-size="10" fill="#fff" textLength="205.9" lengthAdjust="spacingAndGlyphs" xml:space="preserve" >NZDUSD,M15  0.85838 0.85853 0.85838 0.85846</text><text x="16.0" y="584.0" font-size="10" fill="#fff" textLength="81.9" lengthAdjust="spacingAndGlyphs" xml:space="preserve" >AO_Zotik -0.001536</text><g clip-path="url(#clL)"><path d="M12 602.5H618" stroke="#c8c8c8" stroke-dasharray="3,3"/><polyline points="11.6,606.0 30.3,606.7 50.6,611.4 61.6,609.0 80.3,608.3 103.8,609.0 119.4,611.0 144.4,613.0 152.2,606.7 160.0,607.5 177.2,613.0 189.7,611.0 210.0,607.2 225.6,604.4 235.0,602.0 246.0,603.6 261.6,598.4 280.3,595.8 297.5,593.4 310.0,590.3 335.0,594.2 353.8,599.0 366.2,599.0 381.9,599.0 397.5,598.4 403.6,595.6 406.3,601.8 410.7,613.5 417.9,628.7 425.0,639.4 433.1,643.9 441.1,643.3 446.5,642.0 453.7,642.6 464.4,642.6 475.1,644.8 484.1,646.6 492.1,644.4" fill="none" stroke="#008000" stroke-width="2.5" shape-rendering="crispEdges"/><polyline points="11.6,600.5 22.5,601.2 30.3,602.8 47.5,604.4 64.7,603.1 83.4,602.5 99.0,601.2 110.0,602.0 122.5,604.0 144.4,605.2 150.6,601.2 166.2,602.0 181.9,603.6 197.5,602.0 210.0,602.0 219.4,598.0 230.3,596.6 238.1,597.8 247.5,600.5 261.6,599.4 275.6,599.4 291.2,599.4 303.8,598.0 316.2,602.5 331.9,602.8 347.5,605.2 358.4,607.5 369.4,604.4 381.9,602.8 397.5,601.2 403.6,597.9 407.2,606.3 417.9,615.3 426.8,624.2 432.2,624.2 439.4,621.5 448.3,614.4 457.2,610.8 466.2,600.0 473.3,592.5 478.7,594.7 485.9,597.9 492.1,599.7" fill="none" stroke="#ffff00" stroke-width="1" shape-rendering="crispEdges"/><polyline points="11.6,603.6 16.2,602.8 19.4,603.6 23.3,609.0 27.2,609.8 30.3,607.2 35.0,609.0 40.5,610.3 46.0,616.0 50.6,620.8 55.3,616.9 60.0,610.6 63.9,606.7 69.4,607.5 73.3,603.6 77.2,606.7 83.4,609.8 88.1,610.6 91.2,609.8 95.2,605.2 99.8,600.5 103.8,599.7 107.7,604.4 111.6,617.7 116.2,618.4 120.9,613.0 125.6,613.8 130.3,613.0 135.0,615.3 139.7,616.9 144.4,617.7 146.7,609.0 149.0,587.2 152.2,580.9 154.5,584.8 156.9,601.2 159.2,611.4 162.3,613.8 167.8,614.5 172.5,618.4 175.6,620.8 180.3,620.8 184.2,609.0 188.1,605.6 194.4,604.7 199.0,603.6 203.8,605.2 208.4,599.7 214.7,601.2 219.4,594.2 222.5,592.7 228.8,592.7 233.4,589.5 236.6,590.3 239.7,597.3 242.0,606.0 245.2,607.5 249.0,605.2 252.2,592.7 255.3,586.4 258.4,588.0 262.3,582.5 265.5,588.8 268.6,594.2 271.7,593.4 277.2,588.0 281.9,588.0 286.6,590.3 291.2,590.3 296.7,584.8 303.8,582.5 308.4,586.4 313.1,588.8 317.8,598.0 321.7,597.3 325.6,594.2 330.3,598.0 335.0,601.2 339.7,603.6 347.5,604.7 351.4,606.7 356.9,616.9 360.8,611.4 364.7,603.6 369.4,600.5 374.0,601.2 381.9,601.2 389.7,600.5 397.5,598.0 401.8,584.0 403.9,579.5 405.7,582.2 407.2,610.8 408.9,655.5 410.7,686.0 412.2,698.4 415.2,697.5 421.5,702.9 425.9,702.0 432.2,684.0 442.9,660.9 448.3,643.0 456.4,657.3 462.6,643.0 466.2,639.8 471.6,642.0 476.9,639.4 482.3,643.9 488.6,643.0 492.1,628.7" fill="none" stroke="#ff0000" stroke-width="2" shape-rendering="crispEdges"/></g><path d="M12.5 710v4" stroke="#fff"/><text x="11.0" y="723.0" font-size="10" fill="#fff" textLength="46.8" lengthAdjust="spacingAndGlyphs" xml:space="preserve" >21 Jul 2014</text><path d="M76.5 710v4" stroke="#fff"/><text x="75.0" y="723.0" font-size="10" fill="#fff" textLength="49.3" lengthAdjust="spacingAndGlyphs" xml:space="preserve" >22 Jul 06:45</text><path d="M140.5 710v4" stroke="#fff"/><text x="139.0" y="723.0" font-size="10" fill="#fff" textLength="49.3" lengthAdjust="spacingAndGlyphs" xml:space="preserve" >22 Jul 14:45</text><path d="M204.5 710v4" stroke="#fff"/><text x="203.0" y="723.0" font-size="10" fill="#fff" textLength="49.3" lengthAdjust="spacingAndGlyphs" xml:space="preserve" >22 Jul 22:45</text><path d="M268.5 710v4" stroke="#fff"/><text x="267.0" y="723.0" font-size="10" fill="#fff" textLength="49.3" lengthAdjust="spacingAndGlyphs" xml:space="preserve" >23 Jul 06:45</text><path d="M332.5 710v4" stroke="#fff"/><text x="331.0" y="723.0" font-size="10" fill="#fff" textLength="49.3" lengthAdjust="spacingAndGlyphs" xml:space="preserve" >23 Jul 14:45</text><path d="M396.5 710v4" stroke="#fff"/><text x="395.0" y="723.0" font-size="10" fill="#fff" textLength="49.3" lengthAdjust="spacingAndGlyphs" xml:space="preserve" >23 Jul 22:45</text><path d="M460.5 710v4" stroke="#fff"/><text x="459.0" y="723.0" font-size="10" fill="#fff" textLength="49.3" lengthAdjust="spacingAndGlyphs" xml:space="preserve" >24 Jul 06:45</text><g clip-path="url(#clL)"><g transform="translate(4,4)" filter="url(#sh)" opacity="0.20"><path d="M397.0 149.0L480.8 531.8" stroke="#888" stroke-width="4.6"/><polygon points="483.5,544.0 473.3,531.4 487.5,528.3" fill="#888"/></g><path d="M397.0 149.0L480.8 531.8" stroke="#c40000" stroke-width="3.6"/><polygon points="483.5,544.0 473.3,531.4 487.5,528.3" fill="#c40000"/></g><g clip-path="url(#clL)"><g transform="translate(4,4)" filter="url(#sh)" opacity="0.20"><path d="M492.4 546.0L555.6 376.7" stroke="#888" stroke-width="4.6"/><polygon points="560.0,365.0 561.7,381.1 548.1,376.0" fill="#888"/></g><path d="M492.4 546.0L555.6 376.7" stroke="#c40000" stroke-width="3.6"/><polygon points="560.0,365.0 561.7,381.1 548.1,376.0" fill="#c40000"/></g><g clip-path="url(#clL)"><g transform="translate(4,4)" filter="url(#sh)" opacity="0.20"><path d="M569.0 368.0L634.1 554.7" stroke="#888" stroke-width="4.6"/><polygon points="638.0,566.0 626.3,555.2 640.5,550.3" fill="#888"/></g><path d="M569.0 368.0L634.1 554.7" stroke="#c40000" stroke-width="3.6"/><polygon points="638.0,566.0 626.3,555.2 640.5,550.3" fill="#c40000"/></g><g clip-path="url(#clR)"><path d="M683.5 111V707" stroke="#000" stroke-width="1" stroke-dasharray="3,3"/><path d="M779.5 111V707" stroke="#000" stroke-width="1" stroke-dasharray="3,3"/><path d="M875.5 111V707" stroke="#000" stroke-width="1" stroke-dasharray="3,3"/><path d="M971.5 111V707" stroke="#000" stroke-width="1" stroke-dasharray="3,3"/><path d="M1067.5 111V707" stroke="#000" stroke-width="1" stroke-dasharray="3,3"/><path d="M1163.5 111V707" stroke="#000" stroke-width="1" stroke-dasharray="3,3"/><path d="M670.5 111.5H1227.5V453.5H670.5Z" fill="none" stroke="#000"/><path d="M670.5 455.5H1227.5V546.5H670.5Z" fill="none" stroke="#000"/><path d="M670.5 548.5H1227.5V707.5H670.5Z" fill="none" stroke="#000"/><path d="M671 408.5H1227" stroke="#778899"/><g clip-path="url(#clRmain)"><path d="M671.5 169V172M671.5 176V179M675.5 175V176M675.5 217V223M679.5 201V217M679.5 256V257M683.5 227V243M683.5 257V260M687.5 239V241M687.5 254V262M691.5 235V241M691.5 254V275M695.5 235V241M695.5 260V261M699.5 243V245M699.5 260V265M703.5 212V214M703.5 246V255M707.5 213V214M707.5 217V224M711.5 209V212M711.5 217V218M715.5 205V208M715.5 212V219M719.5 201V206M719.5 208V217M723.5 184V202M723.5 205V214M727.5 199V201M727.5 213V214M731.5 206V212M731.5 217V218M735.5 211V215M735.5 223V232M739.5 218V219M739.5 223V227M743.5 183V218M743.5 224V225M747.5 224V224M747.5 236V254M751.5 219V226M751.5 236V239M755.5 207V218M755.5 226V227M759.5 200V204M759.5 219V220M763.5 189V192M763.5 204V208M767.5 188V192M767.5 195V199M771.5 190V194M771.5 197V198M775.5 190V198M775.5 207V232M779.5 139V169M779.5 178V178M783.5 170V173M783.5 177V190M787.5 151V159M787.5 171V172M791.5 152V159M791.5 179V185M795.5 170V171M795.5 179V183M799.5 156V158M799.5 170V171M803.5 145V148M803.5 157V159M807.5 128V139M807.5 148V156M811.5 137V138M811.5 148V150M815.5 136V147M815.5 148V154M819.5 141V148M819.5 168V172M823.5 165V168M823.5 180V180M827.5 166V176M827.5 178V184M831.5 170V174M831.5 183V190M835.5 177V183M835.5 184V195M839.5 180V183M839.5 192V196M843.5 172V180M843.5 192V195M847.5 177V179M847.5 188V194M851.5 178V186M851.5 188V195M855.5 182V185M855.5 190V192M859.5 180V191M859.5 194V195M863.5 186V190M863.5 194V201M867.5 188V188M867.5 189V194M871.5 183V189M871.5 195V201M875.5 189V198M875.5 217V218M879.5 189V198M879.5 202V207M883.5 199V201M883.5 216V217M887.5 212V216M887.5 218V227M891.5 198V201M891.5 218V219M895.5 200V200M895.5 206V216M899.5 190V206M899.5 211V217M903.5 201V211M903.5 219V224M907.5 213V216M907.5 218V223M911.5 204V207M911.5 215V216M915.5 201V207M915.5 241V247M919.5 229V236M919.5 243V244M923.5 222V234M923.5 236V237M927.5 227V232M927.5 239V240M931.5 232V239M931.5 239V247M935.5 178V183M935.5 239V261M939.5 175V183M939.5 235V242M943.5 234V235M943.5 250V250M947.5 245V249M947.5 263V264M951.5 250V261M951.5 262V266M955.5 235V242M955.5 262V264M959.5 240V241M959.5 243V247M963.5 236V237M963.5 243V252M967.5 234V237M967.5 243V250M971.5 229V235M971.5 242V254M975.5 228V230M975.5 234V240M979.5 219V230M979.5 231V232M983.5 228V232M983.5 244V256M987.5 204V218M987.5 245V246M991.5 204V206M991.5 217V227M995.5 204V206M995.5 218V236M999.5 206V207M999.5 217V222M1003.5 204V206M1003.5 213V214M1007.5 194V195M1007.5 213V219M1011.5 189V192M1011.5 195V208M1015.5 188V191M1015.5 192V196M1019.5 188V191M1019.5 207V213M1023.5 190V193M1023.5 207V211M1027.5 189V193M1027.5 200V203M1031.5 195V200M1031.5 200V211M1035.5 198V201M1035.5 206V209M1039.5 202V205M1039.5 222V227M1043.5 193V194M1043.5 222V223M1047.5 194V194M1047.5 199V204M1051.5 196V198M1051.5 201V204M1055.5 193V194M1055.5 201V206M1059.5 192V192M1059.5 195V200M1063.5 152V169M1063.5 194V199M1067.5 152V160M1067.5 336V359M1071.5 331V337M1071.5 370V373M1075.5 348V352M1075.5 369V380M1079.5 348V350M1079.5 352V366M1083.5 327V337M1083.5 348V363M1087.5 337V338M1087.5 377V378M1091.5 376V377M1091.5 392V400M1095.5 376V377M1095.5 414V416M1099.5 400V409M1099.5 423V425M1103.5 416V423M1103.5 428V443M1107.5 406V407M1107.5 427V439" stroke="#00ff00" fill="none"/><rect x="670.5" y="172.5" width="2" height="4" fill="#fff" stroke="#00ff00"/><rect x="674.5" y="176.5" width="2" height="41" fill="#fff" stroke="#00ff00"/><rect x="678.5" y="217.5" width="2" height="39" fill="#fff" stroke="#00ff00"/><rect x="686.5" y="241.5" width="2" height="13" fill="#fff" stroke="#00ff00"/><rect x="694.5" y="241.5" width="2" height="19" fill="#fff" stroke="#00ff00"/><rect x="706.5" y="214.5" width="2" height="3" fill="#fff" stroke="#00ff00"/><rect x="726.5" y="201.5" width="2" height="12" fill="#fff" stroke="#00ff00"/><rect x="730.5" y="212.5" width="2" height="5" fill="#fff" stroke="#00ff00"/><rect x="734.5" y="215.5" width="2" height="8" fill="#fff" stroke="#00ff00"/><rect x="742.5" y="218.5" width="2" height="6" fill="#fff" stroke="#00ff00"/><rect x="746.5" y="224.5" width="2" height="12" fill="#fff" stroke="#00ff00"/><rect x="766.5" y="192.5" width="2" height="3" fill="#fff" stroke="#00ff00"/><rect x="770.5" y="194.5" width="2" height="3" fill="#fff" stroke="#00ff00"/><rect x="774.5" y="198.5" width="2" height="9" fill="#fff" stroke="#00ff00"/><rect x="778.5" y="169.5" width="2" height="9" fill="#fff" stroke="#00ff00"/><rect x="790.5" y="159.5" width="2" height="20" fill="#fff" stroke="#00ff00"/><rect x="810.5" y="138.5" width="2" height="10" fill="#fff" stroke="#00ff00"/><rect x="818.5" y="148.5" width="2" height="20" fill="#fff" stroke="#00ff00"/><rect x="822.5" y="168.5" width="2" height="12" fill="#fff" stroke="#00ff00"/><rect x="830.5" y="174.5" width="2" height="9" fill="#fff" stroke="#00ff00"/><rect x="838.5" y="183.5" width="2" height="9" fill="#fff" stroke="#00ff00"/><rect x="846.5" y="179.5" width="2" height="9" fill="#fff" stroke="#00ff00"/><rect x="854.5" y="185.5" width="2" height="5" fill="#fff" stroke="#00ff00"/><rect x="858.5" y="191.5" width="2" height="3" fill="#fff" stroke="#00ff00"/><rect x="866.5" y="188.5" width="2" height="1" fill="#fff" stroke="#00ff00"/><rect x="870.5" y="189.5" width="2" height="6" fill="#fff" stroke="#00ff00"/><rect x="878.5" y="198.5" width="2" height="4" fill="#fff" stroke="#00ff00"/><rect x="882.5" y="201.5" width="2" height="15" fill="#fff" stroke="#00ff00"/><rect x="886.5" y="216.5" width="2" height="2" fill="#fff" stroke="#00ff00"/><rect x="894.5" y="200.5" width="2" height="6" fill="#fff" stroke="#00ff00"/><rect x="898.5" y="206.5" width="2" height="5" fill="#fff" stroke="#00ff00"/><rect x="902.5" y="211.5" width="2" height="8" fill="#fff" stroke="#00ff00"/><rect x="914.5" y="207.5" width="2" height="34" fill="#fff" stroke="#00ff00"/><rect x="922.5" y="234.5" width="2" height="2" fill="#fff" stroke="#00ff00"/><rect x="926.5" y="232.5" width="2" height="7" fill="#fff" stroke="#00ff00"/><rect x="930.5" y="239.5" width="2" height="1" fill="#fff" stroke="#00ff00"/><rect x="938.5" y="183.5" width="2" height="52" fill="#fff" stroke="#00ff00"/><rect x="942.5" y="235.5" width="2" height="15" fill="#fff" stroke="#00ff00"/><rect x="946.5" y="249.5" width="2" height="14" fill="#fff" stroke="#00ff00"/><rect x="950.5" y="261.5" width="2" height="1" fill="#fff" stroke="#00ff00"/><rect x="966.5" y="237.5" width="2" height="6" fill="#fff" stroke="#00ff00"/><rect x="978.5" y="230.5" width="2" height="1" fill="#fff" stroke="#00ff00"/><rect x="982.5" y="232.5" width="2" height="12" fill="#fff" stroke="#00ff00"/><rect x="994.5" y="206.5" width="2" height="12" fill="#fff" stroke="#00ff00"/><rect x="1002.5" y="206.5" width="2" height="7" fill="#fff" stroke="#00ff00"/><rect x="1014.5" y="191.5" width="2" height="1" fill="#fff" stroke="#00ff00"/><rect x="1018.5" y="191.5" width="2" height="16" fill="#fff" stroke="#00ff00"/><rect x="1026.5" y="193.5" width="2" height="7" fill="#fff" stroke="#00ff00"/><rect x="1030.5" y="200.5" width="2" height="1" fill="#fff" stroke="#00ff00"/><rect x="1034.5" y="201.5" width="2" height="5" fill="#fff" stroke="#00ff00"/><rect x="1038.5" y="205.5" width="2" height="17" fill="#fff" stroke="#00ff00"/><rect x="1046.5" y="194.5" width="2" height="5" fill="#fff" stroke="#00ff00"/><rect x="1050.5" y="198.5" width="2" height="3" fill="#fff" stroke="#00ff00"/><rect x="1058.5" y="192.5" width="2" height="3" fill="#fff" stroke="#00ff00"/><rect x="1066.5" y="160.5" width="2" height="176" fill="#fff" stroke="#00ff00"/><rect x="1070.5" y="337.5" width="2" height="33" fill="#fff" stroke="#00ff00"/><rect x="1086.5" y="338.5" width="2" height="39" fill="#fff" stroke="#00ff00"/><rect x="1090.5" y="377.5" width="2" height="15" fill="#fff" stroke="#00ff00"/><rect x="1094.5" y="377.5" width="2" height="37" fill="#fff" stroke="#00ff00"/><rect x="1098.5" y="409.5" width="2" height="14" fill="#fff" stroke="#00ff00"/><rect x="1102.5" y="423.5" width="2" height="5" fill="#fff" stroke="#00ff00"/><rect x="682.5" y="243.5" width="2" height="14" fill="#000" stroke="#00ff00"/><rect x="690.5" y="241.5" width="2" height="13" fill="#000" stroke="#00ff00"/><rect x="698.5" y="245.5" width="2" height="15" fill="#000" stroke="#00ff00"/><rect x="702.5" y="214.5" width="2" height="32" fill="#000" stroke="#00ff00"/><rect x="710.5" y="212.5" width="2" height="5" fill="#000" stroke="#00ff00"/><rect x="714.5" y="208.5" width="2" height="4" fill="#000" stroke="#00ff00"/><rect x="718.5" y="206.5" width="2" height="2" fill="#000" stroke="#00ff00"/><rect x="722.5" y="202.5" width="2" height="3" fill="#000" stroke="#00ff00"/><rect x="738.5" y="219.5" width="2" height="4" fill="#000" stroke="#00ff00"/><rect x="750.5" y="226.5" width="2" height="10" fill="#000" stroke="#00ff00"/><rect x="754.5" y="218.5" width="2" height="8" fill="#000" stroke="#00ff00"/><rect x="758.5" y="204.5" width="2" height="15" fill="#000" stroke="#00ff00"/><rect x="762.5" y="192.5" width="2" height="12" fill="#000" stroke="#00ff00"/><rect x="782.5" y="173.5" width="2" height="4" fill="#000" stroke="#00ff00"/><rect x="786.5" y="159.5" width="2" height="12" fill="#000" stroke="#00ff00"/><rect x="794.5" y="171.5" width="2" height="8" fill="#000" stroke="#00ff00"/><rect x="798.5" y="158.5" width="2" height="12" fill="#000" stroke="#00ff00"/><rect x="802.5" y="148.5" width="2" height="9" fill="#000" stroke="#00ff00"/><rect x="806.5" y="139.5" width="2" height="9" fill="#000" stroke="#00ff00"/><rect x="814.5" y="147.5" width="2" height="1" fill="#000" stroke="#00ff00"/><rect x="826.5" y="176.5" width="2" height="2" fill="#000" stroke="#00ff00"/><rect x="834.5" y="183.5" width="2" height="1" fill="#000" stroke="#00ff00"/><rect x="842.5" y="180.5" width="2" height="12" fill="#000" stroke="#00ff00"/><rect x="850.5" y="186.5" width="2" height="2" fill="#000" stroke="#00ff00"/><rect x="862.5" y="190.5" width="2" height="4" fill="#000" stroke="#00ff00"/><rect x="874.5" y="198.5" width="2" height="19" fill="#000" stroke="#00ff00"/><rect x="890.5" y="201.5" width="2" height="17" fill="#000" stroke="#00ff00"/><rect x="906.5" y="216.5" width="2" height="2" fill="#000" stroke="#00ff00"/><rect x="910.5" y="207.5" width="2" height="8" fill="#000" stroke="#00ff00"/><rect x="918.5" y="236.5" width="2" height="7" fill="#000" stroke="#00ff00"/><rect x="934.5" y="183.5" width="2" height="56" fill="#000" stroke="#00ff00"/><rect x="954.5" y="242.5" width="2" height="20" fill="#000" stroke="#00ff00"/><rect x="958.5" y="241.5" width="2" height="2" fill="#000" stroke="#00ff00"/><rect x="962.5" y="237.5" width="2" height="6" fill="#000" stroke="#00ff00"/><rect x="970.5" y="235.5" width="2" height="7" fill="#000" stroke="#00ff00"/><rect x="974.5" y="230.5" width="2" height="4" fill="#000" stroke="#00ff00"/><rect x="986.5" y="218.5" width="2" height="27" fill="#000" stroke="#00ff00"/><rect x="990.5" y="206.5" width="2" height="11" fill="#000" stroke="#00ff00"/><rect x="998.5" y="207.5" width="2" height="10" fill="#000" stroke="#00ff00"/><rect x="1006.5" y="195.5" width="2" height="18" fill="#000" stroke="#00ff00"/><rect x="1010.5" y="192.5" width="2" height="3" fill="#000" stroke="#00ff00"/><rect x="1022.5" y="193.5" width="2" height="14" fill="#000" stroke="#00ff00"/><rect x="1042.5" y="194.5" width="2" height="28" fill="#000" stroke="#00ff00"/><rect x="1054.5" y="194.5" width="2" height="7" fill="#000" stroke="#00ff00"/><rect x="1062.5" y="169.5" width="2" height="25" fill="#000" stroke="#00ff00"/><rect x="1074.5" y="352.5" width="2" height="17" fill="#000" stroke="#00ff00"/><rect x="1078.5" y="350.5" width="2" height="2" fill="#000" stroke="#00ff00"/><rect x="1082.5" y="337.5" width="2" height="11" fill="#000" stroke="#00ff00"/><rect x="1106.5" y="407.5" width="2" height="20" fill="#000" stroke="#00ff00"/></g></g><polygon points="1107,112 1116,112 1111.5,117" fill="#7890a8"/><path d="M1228 120.5h3" stroke="#000"/><text x="1233.0" y="123.7" font-size="10" fill="#000" textLength="33.1" lengthAdjust="spacingAndGlyphs" xml:space="preserve" >0.87235</text><path d="M1228 153.5h3" stroke="#000"/><text x="1233.0" y="156.8" font-size="10" fill="#000" textLength="33.1" lengthAdjust="spacingAndGlyphs" xml:space="preserve" >0.87075</text><path d="M1228 186.5h3" stroke="#000"/><text x="1233.0" y="189.9" font-size="10" fill="#000" textLength="33.1" lengthAdjust="spacingAndGlyphs" xml:space="preserve" >0.86915</text><path d="M1228 219.5h3" stroke="#000"/><text x="1233.0" y="223.0" font-size="10" fill="#000" textLength="33.1" lengthAdjust="spacingAndGlyphs" xml:space="preserve" >0.86755</text><path d="M1228 252.5h3" stroke="#000"/><text x="1233.0" y="256.1" font-size="10" fill="#000" textLength="33.1" lengthAdjust="spacingAndGlyphs" xml:space="preserve" >0.86595</text><path d="M1228 285.5h3" stroke="#000"/><text x="1233.0" y="288.2" font-size="10" fill="#000" textLength="33.1" lengthAdjust="spacingAndGlyphs" xml:space="preserve" >0.86440</text><path d="M1228 318.5h3" stroke="#000"/><text x="1233.0" y="321.6" font-size="10" fill="#000" textLength="33.1" lengthAdjust="spacingAndGlyphs" xml:space="preserve" >0.86280</text><path d="M1228 351.5h3" stroke="#000"/><text x="1233.0" y="354.4" font-size="10" fill="#000" textLength="33.1" lengthAdjust="spacingAndGlyphs" xml:space="preserve" >0.86120</text><path d="M1228 384.5h3" stroke="#000"/><text x="1233.0" y="387.2" font-size="10" fill="#000" textLength="33.1" lengthAdjust="spacingAndGlyphs" xml:space="preserve" >0.85960</text><path d="M1228 416.5h3" stroke="#000"/><text x="1233.0" y="419.8" font-size="10" fill="#000" textLength="33.1" lengthAdjust="spacingAndGlyphs" xml:space="preserve" >0.85800</text><path d="M1228 450.5h3" stroke="#000"/><text x="1233.0" y="453.3" font-size="10" fill="#000" textLength="33.1" lengthAdjust="spacingAndGlyphs" xml:space="preserve" >0.85640</text><rect x="1229" y="402" width="38" height="10.5" fill="#000"/><text x="1232.0" y="411.5" font-size="10" fill="#fff" textLength="33.1" lengthAdjust="spacingAndGlyphs" xml:space="preserve" >0.85846</text><path d="M1228 462.5h3M1228 482.5h3M1228 540.5h3" stroke="#000"/><text x="1231.0" y="466.2" font-size="10" fill="#000" textLength="38.2" lengthAdjust="spacingAndGlyphs" xml:space="preserve" >0.003383</text><text x="1231.0" y="485.3" font-size="10" fill="#000" textLength="17.8" lengthAdjust="spacingAndGlyphs" xml:space="preserve" >0.00</text><text x="1231.0" y="543.6" font-size="10" fill="#000" textLength="36.1" lengthAdjust="spacingAndGlyphs" xml:space="preserve" >-0.00832</text><path d="M1228 556.5h3" stroke="#000"/><text x="1233.0" y="559.1" font-size="10" fill="#000" textLength="5.1" lengthAdjust="spacingAndGlyphs" xml:space="preserve" >0</text><path d="M1228 581.5h3" stroke="#000"/><text x="1233.0" y="584.8" font-size="10" fill="#000" textLength="13.2" lengthAdjust="spacingAndGlyphs" xml:space="preserve" >-20</text><path d="M1228 628.5h3" stroke="#000"/><text x="1233.0" y="631.6" font-size="10" fill="#000" textLength="13.2" lengthAdjust="spacingAndGlyphs" xml:space="preserve" >-50</text><path d="M1228 675.5h3" stroke="#000"/><text x="1233.0" y="678.6" font-size="10" fill="#000" textLength="13.2" lengthAdjust="spacingAndGlyphs" xml:space="preserve" >-80</text><path d="M1228 701.5h3" stroke="#000"/><text x="1233.0" y="704.6" font-size="10" fill="#000" textLength="18.3" lengthAdjust="spacingAndGlyphs" xml:space="preserve" >-100</text><rect x="684" y="113" width="205" height="12" fill="#fff"/><path d="M674 117h7l-3.5 4z" fill="#000"/><text x="686.0" y="123.0" font-size="10" fill="#000" textLength="200.6" lengthAdjust="spacingAndGlyphs" xml:space="preserve" >NZDUSD,H1  0.85750 0.85853 0.85692 0.85846</text><text x="675.0" y="467.5" font-size="10" fill="#000" textLength="84.1" lengthAdjust="spacingAndGlyphs" xml:space="preserve" >AO_Zotik -0.007792</text><text x="675.0" y="561.0" font-size="10" fill="#000" textLength="156.7" lengthAdjust="spacingAndGlyphs" xml:space="preserve" >WPR_VSmark(21|55|77|277) -93.5821</text><g clip-path="url(#clR)"><path d="M671 482.5H1227" stroke="#c0c0c0" stroke-dasharray="3,3"/><polyline points="670.0,480.5 685.0,483.0 710.0,482.0 735.0,481.2 760.0,480.0 785.0,477.5 810.0,475.0 820.0,475.8 835.0,480.0 860.0,482.0 885.0,485.0 910.0,486.2 935.0,487.5 960.0,485.0 985.0,483.0 1010.0,478.8 1035.0,478.0 1065.0,478.8 1075.0,483.8 1090.0,488.8 1106.2,493.8" fill="none" stroke="#000" stroke-width="1" shape-rendering="crispEdges"/><polyline points="670.0,498.8 685.0,501.2 710.0,500.0 735.0,496.2 760.0,493.8 780.0,490.0 797.5,486.2 815.0,482.0 832.5,482.5 860.0,482.5 875.0,485.0 910.0,487.5 922.5,488.8 947.5,489.5 960.0,488.8 985.0,487.5 1010.0,484.5 1035.0,482.5 1065.0,482.0 1070.0,486.2 1090.0,495.5 1107.5,503.8" fill="none" stroke="#008000" stroke-width="2" shape-rendering="crispEdges"/><polyline points="670.0,486.2 675.0,490.0 682.5,500.0 690.0,507.5 700.0,506.2 710.0,493.8 720.0,488.8 728.8,483.8 735.0,487.0 745.0,487.5 755.0,488.8 765.0,476.2 771.2,476.2 776.2,477.5 782.5,473.0 787.5,467.0 802.5,468.0 810.0,462.0 816.2,461.2 822.5,466.2 832.5,476.2 840.0,480.5 850.0,481.2 860.0,482.5 875.0,485.0 890.0,493.0 900.0,491.2 910.0,493.8 922.5,497.0 932.5,495.5 942.5,491.2 951.2,498.8 957.5,497.5 965.0,492.5 970.0,491.2 985.0,487.0 997.5,480.0 1015.0,473.0 1027.5,473.8 1040.0,476.2 1050.0,475.0 1062.5,473.0 1066.2,475.0 1070.0,492.5 1075.0,517.5 1078.8,528.8 1087.5,525.5 1095.0,530.0 1103.8,540.0 1107.5,540.5" fill="none" stroke="#ff0000" stroke-width="2" shape-rendering="crispEdges"/><path d="M671 581.5H1227M671 628.5H1227M671 675.5H1227" stroke="#000" stroke-dasharray="8,4"/><polyline points="671.3,631.1 672.7,655.0 674.4,678.3 676.8,695.8 679.7,704.0 681.4,695.8 683.2,683.0 687.3,694.7 691.3,663.2 695.4,688.8 698.3,676.0 703.0,631.1 707.1,633.4 712.3,628.2 719.3,620.0 724.0,615.3 729.6,631.0 735.3,635.0 739.5,631.0 746.6,656.5 753.8,622.4 763.7,564.0 770.8,571.2 776.5,592.6 780.7,596.8 783.6,589.7 787.3,575.5 791.2,604.0 796.4,585.5 800.6,568.4 807.7,560.0 814.8,568.4 818.0,589.8 822.2,608.7 827.4,606.6 831.6,628.6 834.8,632.8 839.0,647.4 843.1,629.6 847.3,641.1 851.5,638.0 855.7,646.4 859.9,700.8 865.1,682.0 871.4,695.6 875.6,671.5 879.8,679.9 884.0,701.9 891.3,662.1 897.6,676.8 902.9,687.2 911.2,661.0 915.4,696.7 920.7,681.0 927.0,687.2 931.1,684.1 935.3,555.2 938.5,596.1 943.7,679.9 950.0,698.8 954.2,667.3 962.6,656.9 968.0,667.3 971.1,652.7 975.3,645.3 979.5,646.4 983.7,669.4 986.9,621.2 991.0,604.5 995.2,622.3 999.4,605.5 1003.6,615.0 1007.8,583.5 1012.0,578.3 1016.2,577.2 1019.3,605.5 1023.5,562.6 1027.7,574.1 1031.9,576.2 1036.1,589.8 1040.3,629.6 1043.4,564.7 1047.6,573.0 1051.8,582.5 1056.0,562.6 1060.2,565.7 1063.3,573.0 1064.4,589.8 1066.5,633.8 1068.6,679.9 1070.7,700.8 1074.9,689.3 1083.2,681.0 1088.5,699.8 1093.7,700.8 1098.9,705.0 1107.3,689.3" fill="none" stroke="#ff0000" stroke-width="1" shape-rendering="crispEdges"/><polyline points="671.5,684.8 675.0,699.3 678.5,704.0 682.0,699.3 685.5,700.5 691.3,685.3 695.4,697.6 701.8,685.3 703.6,669.0 711.2,666.7 715.8,644.5 723.4,638.1 723.5,639.0 728.8,648.5 735.0,652.7 741.3,650.6 747.6,668.4 756.0,642.2 763.3,623.3 770.7,628.6 774.9,636.9 779.0,602.4 787.4,583.5 791.6,605.5 797.9,581.4 806.3,560.5 812.6,568.9 818.0,585.6 822.2,600.3 827.4,601.3 831.6,606.6 835.8,610.8 839.0,621.2 843.1,604.5 847.3,612.9 851.5,611.8 859.9,620.2 865.1,613.9 869.3,617.0 874.6,622.3 879.8,627.5 884.0,642.2 887.1,645.3 891.3,627.5 897.6,638.0 902.9,646.4 911.2,634.9 913.3,659.0 918.6,679.9 922.8,682.0 927.0,687.2 931.1,688.3 935.3,615.0 940.6,671.5 947.9,702.9 952.1,700.8 956.3,682.0 963.6,674.7 968.0,677.8 972.2,667.3 977.4,665.2 983.7,682.0 987.9,642.2 991.0,633.8 995.2,650.6 999.4,640.1 1002.6,646.4 1007.8,629.6 1015.1,622.3 1023.5,624.4 1031.9,629.6 1039.2,640.1 1043.4,594.0 1051.8,599.2 1056.0,584.6 1060.2,585.6 1063.3,572.0 1065.4,623.3 1067.5,684.1 1070.7,698.8 1074.9,688.3 1083.2,677.8 1087.4,696.7 1093.7,697.7 1098.9,705.0 1103.1,697.7 1107.3,688.3" fill="none" stroke="#1e90ff" stroke-width="1" shape-rendering="crispEdges"/><polyline points="671.5,684.8 678.5,704.0 683.2,701.7 691.3,693.5 695.4,700.5 701.8,683.0 703.0,679.5 711.2,677.8 722.3,674.3 722.5,674.7 728.8,681.0 737.1,682.0 747.6,688.3 756.0,677.8 761.2,673.6 764.4,669.4 768.6,670.5 771.7,659.0 774.9,663.1 779.0,646.4 782.2,644.3 787.4,634.9 791.6,648.5 799.0,634.9 802.1,587.7 807.3,579.3 812.6,584.6 818.0,591.9 822.2,604.5 827.4,606.6 831.6,612.9 834.8,611.8 839.0,622.3 843.1,610.8 847.3,618.1 852.6,617.0 859.9,624.4 867.2,617.0 874.6,622.3 879.8,627.5 884.0,642.2 887.1,645.3 891.3,627.5 897.6,638.0 902.9,646.4 911.2,634.9 915.4,671.5 922.8,663.1 927.0,668.4 931.1,667.3 935.3,608.7 939.5,654.8 945.8,686.2 950.0,693.5 954.2,671.5 960.5,667.3 968.0,671.5 972.2,660.0 977.4,658.9 983.7,677.8 987.9,642.2 991.0,633.8 995.2,644.3 1002.6,646.4 1007.8,625.4 1015.1,621.2 1019.3,635.9 1023.5,624.4 1031.9,631.7 1039.2,656.9 1043.4,624.4 1051.8,632.8 1056.0,624.4 1060.2,622.3 1063.3,594.0 1065.4,623.3 1067.5,682.0 1070.7,700.8 1074.9,689.3 1083.2,681.0 1088.5,699.8 1093.7,700.8 1098.9,705.0 1107.3,689.3" fill="none" stroke="#9a30e0" stroke-width="1" shape-rendering="crispEdges"/><polyline points="671.5,687.1 675.0,701.7 678.5,706.3 683.2,700.5 687.3,701.7 691.3,692.9 695.4,700.5 701.8,685.3 703.6,683.0 711.2,680.7 721.7,677.2 722.5,676.4 735.3,683.5 746.6,690.6 756.6,676.4 765.0,673.5 775.0,679.2 779.3,667.8 787.8,660.7 792.0,667.8 807.7,652.2 814.8,655.0 818.0,661.0 824.3,668.4 830.6,669.4 839.0,672.6 843.1,669.4 851.5,670.5 859.9,673.6 866.2,671.5 874.6,674.7 885.0,682.0 890.3,675.7 897.6,680.9 903.9,684.1 911.2,679.9 915.4,692.5 922.8,691.4 931.1,690.4 935.3,669.4 938.5,679.9 947.9,700.8 952.1,698.8 957.3,694.6 963.6,692.5 968.0,694.6 974.3,689.3 979.5,689.3 983.7,694.6 989.0,682.0 993.1,679.9 997.3,682.0 1002.6,678.8 1006.8,674.7 1015.1,672.6 1019.3,678.8 1023.5,674.7 1030.9,675.7 1036.1,677.8 1039.2,684.1 1043.4,674.7 1049.7,676.8 1056.0,673.6 1060.2,673.6 1063.3,664.2 1065.4,679.9 1067.5,696.7 1070.7,706.1 1074.9,698.8 1083.2,693.5 1087.4,704.0 1093.7,703.0 1098.9,706.1 1107.3,696.7" fill="none" stroke="#000" stroke-width="2.4" shape-rendering="crispEdges"/></g><path d="M671.5 708v4" stroke="#000"/><text x="670.0" y="719.8" font-size="10" fill="#000" textLength="46.8" lengthAdjust="spacingAndGlyphs" xml:space="preserve" >17 Jul 2014</text><path d="M735.5 708v4" stroke="#000"/><text x="734.0" y="719.8" font-size="10" fill="#000" textLength="49.3" lengthAdjust="spacingAndGlyphs" xml:space="preserve" >18 Jul 13:00</text><path d="M799.5 708v4" stroke="#000"/><text x="798.0" y="719.8" font-size="10" fill="#000" textLength="49.3" lengthAdjust="spacingAndGlyphs" xml:space="preserve" >21 Jul 05:00</text><path d="M863.5 708v4" stroke="#000"/><text x="862.0" y="719.8" font-size="10" fill="#000" textLength="49.3" lengthAdjust="spacingAndGlyphs" xml:space="preserve" >21 Jul 21:00</text><path d="M927.5 708v4" stroke="#000"/><text x="926.0" y="719.8" font-size="10" fill="#000" textLength="49.3" lengthAdjust="spacingAndGlyphs" xml:space="preserve" >22 Jul 13:00</text><path d="M991.5 708v4" stroke="#000"/><text x="990.0" y="719.8" font-size="10" fill="#000" textLength="49.3" lengthAdjust="spacingAndGlyphs" xml:space="preserve" >23 Jul 05:00</text><path d="M1055.5 708v4" stroke="#000"/><text x="1054.0" y="719.8" font-size="10" fill="#000" textLength="49.3" lengthAdjust="spacingAndGlyphs" xml:space="preserve" >23 Jul 21:00</text><g clip-path="url(#clR)"><ellipse cx="1082" cy="515" rx="61.5" ry="37.5" fill="none" stroke="#000" stroke-width="3" opacity="0.35" filter="url(#sh)"/><ellipse cx="1078.75" cy="511.25" rx="61.5" ry="37.5" fill="none" stroke="#228b22" stroke-width="2"/></g><g clip-path="url(#clR)"><g transform="translate(4,4)" filter="url(#sh)" opacity="0.45"><path d="M1065.5 160.0L1099.0 430.6" stroke="#000" stroke-width="4.4"/><polygon points="1100.5,442.5 1091.6,429.5 1106.0,427.7" fill="#000"/></g><path d="M1065.5 160.0L1099.0 430.6" stroke="#c40000" stroke-width="3.4"/><polygon points="1100.5,442.5 1091.6,429.5 1106.0,427.7" fill="#c40000"/></g><g clip-path="url(#clR)"><g transform="translate(4,4)" filter="url(#sh)" opacity="0.45"><path d="M1110.4 430.0L1137.5 360.6" stroke="#000" stroke-width="4.4"/><polygon points="1142.0,349.0 1143.5,365.1 1130.0,359.9" fill="#000"/></g><path d="M1110.4 430.0L1137.5 360.6" stroke="#c40000" stroke-width="3.4"/><polygon points="1142.0,349.0 1143.5,365.1 1130.0,359.9" fill="#c40000"/></g><g clip-path="url(#clR)"><g transform="translate(4,4)" filter="url(#sh)" opacity="0.45"><path d="M1148.0 364.7L1186.1 464.8" stroke="#000" stroke-width="4.4"/><polygon points="1190.5,476.5 1178.3,465.6 1192.4,460.3" fill="#000"/></g><path d="M1148.0 364.7L1186.1 464.8" stroke="#c40000" stroke-width="3.4"/><polygon points="1190.5,476.5 1178.3,465.6 1192.4,460.3" fill="#c40000"/></g></svg>
</body></html>
